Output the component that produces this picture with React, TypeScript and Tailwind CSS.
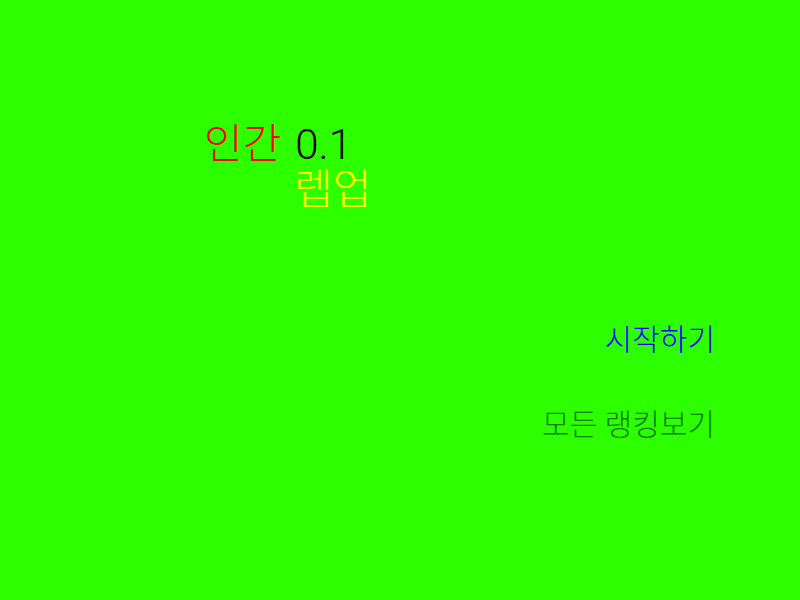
export default function App() {
  return (
    <div
      className="w-[800px] h-[600px] bg-[#2dff00] flex flex-col font-light"
      style={{ fontFamily: 'Roboto, "Noto Sans CJK KR", sans-serif' }}
    >
      {/* title */}
      <div className="pt-[122px] pl-[204px] text-[42px] leading-[45px]">
        <div className="flex gap-[14px]">
          <span className="text-[#ff0000]">인간</span>
          <span className="text-black">0.1</span>
        </div>
        <div className="pl-[90px] text-[#ffff00]">렙업</div>
      </div>

      {/* menu */}
      <div className="mt-[109px] pr-[85px] flex flex-col items-end gap-[47px] text-[30px] leading-[38px]">
        <button className="text-[#0000ff]">시작하기</button>
        <button className="text-[#008000]">모든 랭킹보기</button>
      </div>
    </div>
  );
}
